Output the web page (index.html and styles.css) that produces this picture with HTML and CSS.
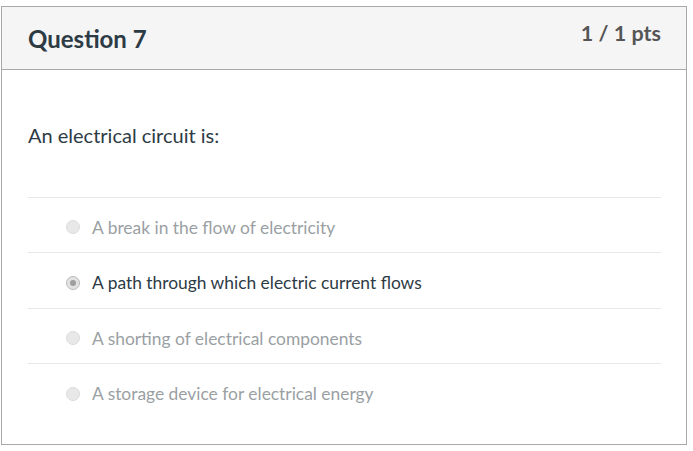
FILE: index.html
```html
<!DOCTYPE html>
<html>
<head>
<meta charset="utf-8">
<link rel="stylesheet" href="styles.css">
</head>
<body>
<div class="question">
  <div class="header">
    <h2 class="title">Question 7</h2>
    <div class="pts">1 / 1 pts</div>
  </div>
  <div class="content">
    <p class="text">An electrical circuit is:</p>
    <ul class="answers">
      <li class="answer"><span class="radio"></span><span class="label">A break in the flow of electricity</span></li>
      <li class="answer selected"><span class="radio"></span><span class="label">A path through which electric current flows</span></li>
      <li class="answer"><span class="radio"></span><span class="label">A shorting of electrical components</span></li>
      <li class="answer"><span class="radio"></span><span class="label">A storage device for electrical energy</span></li>
    </ul>
  </div>
</div>
</body>
</html>
```
FILE: styles.css
```css
html, body {
  margin: 0;
  padding: 0;
  background: #fff;
}
body {
  font-family: Lato, "Open Sans", sans-serif;
  color: #2d3b45;
  padding: 6px 0 0 1px;
}
.question {
  width: 684px;
  height: 437px;
  border: 1px solid #a9a9a9;
  display: flex;
  flex-direction: column;
}
.header {
  height: 62px;
  background: #f5f5f5;
  border-bottom: 1px solid #a9a9a9;
  display: flex;
  justify-content: space-between;
  padding: 0 25px 0 26px;
}
.title {
  margin: 0;
  font-size: 24px;
  font-weight: 700;
  line-height: 64px;
  color: #2d3b45;
}
.pts {
  font-size: 21.5px;
  font-weight: 700;
  color: #555;
  padding-top: 13px;
  line-height: 26px;
}
.content {
  padding: 0 25px 0 26px;
}
.text {
  margin: 53px 0 0;
  font-size: 20px;
  line-height: 24px;
}
.answers {
  list-style: none;
  margin: 50px 0 0;
  padding: 0;
  border-top: 1px solid #e8e8e8;
}
.answer {
  height: 55px;
  box-sizing: border-box;
  padding-top: 4px;
  display: flex;
  align-items: center;
  border-bottom: 1px solid #e8e8e8;
  padding-left: 38px;
  font-size: 17.4px;
  color: #9a9fa3;
}
.answer:nth-child(2) {
  height: 56px;
}
.answer:last-child {
  border-bottom: none;
}
.answer.selected {
  color: #2d3b45;
}
.radio {
  width: 14px;
  height: 14px;
  border-radius: 50%;
  background: #e8e8e8;
  border: 1px solid #dcdcdc;
  box-sizing: border-box;
  margin-right: 12px;
  display: flex;
  align-items: center;
  justify-content: center;
}
.selected .radio {
  background: #e2e2e2;
  border-color: #bbb;
}
.selected .radio::after {
  content: "";
  width: 6px;
  height: 6px;
  border-radius: 50%;
  background: #9e9e9e;
}
```
